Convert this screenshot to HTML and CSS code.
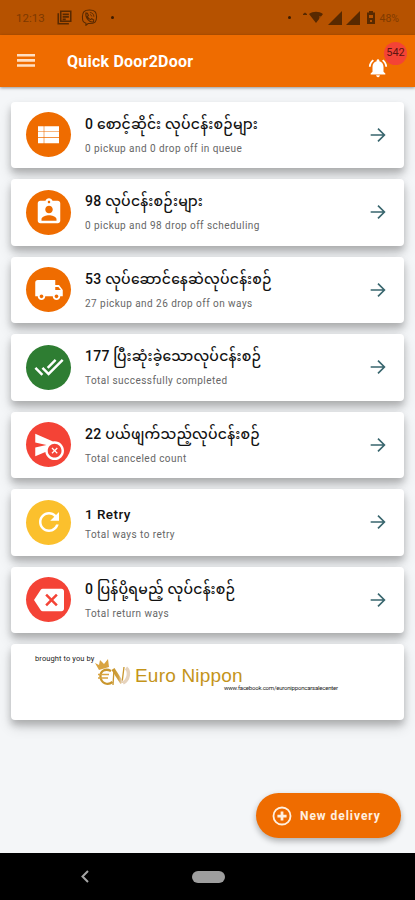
FILE: index.html
```html
<!DOCTYPE html>
<html lang="my">
<head>
    <meta charset="UTF-8">
    <meta name="viewport" content="width=device-width, initial-scale=1.0">
    <title>Quick Door2Door</title>
    <link rel="stylesheet" href="styles.css">
</head>
<body>
    <div class="status-bar">
        <span class="clock">12:13</span>
        <svg class="status-news" width="15" height="15" viewBox="0 0 24 24"><path fill="none" stroke="currentColor" stroke-width="2.5" d="M2 5v17h17M6 2h16v16H6z"/><path fill="none" stroke="currentColor" stroke-width="2.5" d="M9 7h10M9 11h10M9 15h5"/></svg>
        <svg class="status-call" width="17" height="17" viewBox="0 0 24 24"><path fill="none" stroke="currentColor" stroke-width="1.5" d="M12 1.500C4.500 1.500 2 4 2 11s1.500 8 5 9v3l3-2.500h2c7.500 0 10-2.500 10-9.500S19.500 1.500 12 1.500z"/><path fill="none" stroke="currentColor" stroke-width="1.5" d="M7 5.500l2 .5 1.500 3-1.500 1.500c1 2.500 2 3.500 4.500 4.500l1.500-1.500 3 2-.5 2.500c-5 1.500-12-5.500-10.500-12.500z"/><path fill="none" stroke="currentColor" stroke-width="1.200" d="M12.500 5c3.500.2 5.500 2 5.700 6M12.700 8c1.500.1 2.300 1 2.500 2.500"/></svg>
        <i class="dot"></i>
        <div class="status-right">
            <i class="dot"></i>
            <svg width="21" height="13" viewBox="0 0 21 13"><path d="M0 3l2-1.500L4 3v1H0zM6 3c4-3 10-3 14 0l-7 9z"/><path stroke="#b65200" stroke-width="1" fill="none" d="M17 5v6"/></svg>
            <svg width="14" height="14" viewBox="0 0 14 14"><path d="M14 0v14H0z"/></svg>
            <svg width="14" height="14" viewBox="0 0 14 14"><path d="M14 0v14H0z"/></svg>
            <svg class="battery" width="8" height="13" viewBox="0 0 8 13"><path fill-rule="evenodd" d="M2 0h4v1.500h2V13H0V1.500h2zM2 4v3h4V4zM3 9v2h2V9z"/></svg>
            <span class="percent">48%</span>
        </div>
    </div>

    <header class="app-bar">
        <svg class="menu" width="18" height="13" viewBox="0 0 18 13"><path d="M0 0h18v2.600H0zM0 5.100h18v2.600H0zM0 10.200h18v2.600H0z"/></svg>
        <h1>Quick Door2Door</h1>
        <div class="bell">
            <svg width="22" height="22" viewBox="0 0 24 24"><path d="M7.580 4.080L6.150 2.650C3.750 4.480 2.170 7.300 2.030 10.500h2c.15-2.650 1.510-4.970 3.550-6.420zm12.390 6.420h2c-.15-3.200-1.730-6.020-4.120-7.850l-1.420 1.430c2.020 1.450 3.390 3.770 3.540 6.420zM18 11c0-3.070-1.640-5.640-4.500-6.320V4c0-.83-.67-1.500-1.500-1.500s-1.500.67-1.500 1.500v.68C7.630 5.360 6 7.920 6 11v5l-2 2v1h16v-1l-2-2v-5zm-6 11c.14 0 .27-.01.4-.04.65-.14 1.180-.58 1.440-1.180.1-.24.15-.5.15-.78h-4c.01 1.100.9 2 2.010 2z"/></svg>
            <span class="badge">542</span>
        </div>
    </header>

    <main class="list">
        <div class="card">
            <div class="icon orange">
                <svg width="29" height="28" viewBox="0 0 24 24"><path d="M3 4.500h4.900v4.500H3zM8.400 4.500H21v4.500H8.400zM3 9.500h4.900v4.500H3zM8.400 9.500H21v4.500H8.400zM3 14.500h4.900V19H3zM8.400 14.500H21V19H8.400z"/></svg>
            </div>
            <div class="info">
                <h2>0 စောင့်ဆိုင်း လုပ်ငန်းစဉ်များ</h2>
                <p>0 pickup and 0 drop off in queue</p>
            </div>
            <svg class="arrow" width="22" height="22" viewBox="0 0 24 24"><path d="M4 12h15M12 5l7 7-7 7"/></svg>
        </div>
        <div class="card">
            <div class="icon orange">
                <svg width="30" height="30" viewBox="0 0 24 24"><path d="M19 3h-4.180C14.400 1.840 13.300 1 12 1s-2.400.84-2.820 2H5c-1.100 0-2 .9-2 2v14c0 1.100.9 2 2 2h14c1.100 0 2-.9 2-2V5c0-1.100-.9-2-2-2zm-7 0c.55 0 1 .45 1 1s-.45 1-1 1-1-.45-1-1 .45-1 1-1zm0 4c1.660 0 3 1.340 3 3s-1.340 3-3 3-3-1.340-3-3 1.340-3 3-3zm6 12H6v-1.400c0-2 4-3.100 6-3.100s6 1.100 6 3.100V19z"/></svg>
            </div>
            <div class="info">
                <h2>98 လုပ်ငန်းစဉ်းများ</h2>
                <p>0 pickup and 98 drop off scheduling</p>
            </div>
            <svg class="arrow" width="22" height="22" viewBox="0 0 24 24"><path d="M4 12h15M12 5l7 7-7 7"/></svg>
        </div>
        <div class="card">
            <div class="icon orange">
                <svg width="30" height="30" viewBox="0 0 24 24"><path d="M20 8h-3V4H3c-1.100 0-2 .9-2 2v11h2c0 1.660 1.340 3 3 3s3-1.340 3-3h6c0 1.660 1.340 3 3 3s3-1.340 3-3h2v-5l-3-4zM6 18.500c-.83 0-1.500-.67-1.500-1.500s.67-1.500 1.500-1.500 1.500.67 1.500 1.500-.67 1.500-1.500 1.500zm13.500-9l1.960 2.500H17V9.500h2.500zm-1.500 9c-.83 0-1.500-.67-1.500-1.500s.67-1.500 1.500-1.500 1.500.67 1.500 1.500-.67 1.500-1.500 1.500z"/></svg>
            </div>
            <div class="info">
                <h2>53 လုပ်ဆောင်နေဆဲလုပ်ငန်းစဉ်</h2>
                <p>27 pickup and 26 drop off on ways</p>
            </div>
            <svg class="arrow" width="22" height="22" viewBox="0 0 24 24"><path d="M4 12h15M12 5l7 7-7 7"/></svg>
        </div>
        <div class="card">
            <div class="icon green">
                <svg width="30" height="30" viewBox="0 0 24 24"><path d="M18 7l-1.410-1.410-6.340 6.340 1.410 1.410L18 7zm4.240-1.410L11.660 16.170 7.480 12l-1.410 1.410L11.660 19l12-12-1.420-1.410zM.41 13.410L6 19l1.410-1.410L1.830 12 .41 13.410z"/></svg>
            </div>
            <div class="info">
                <h2>177 ပြီးဆုံးခဲ့သောလုပ်ငန်းစဉ်</h2>
                <p>Total successfully completed</p>
            </div>
            <svg class="arrow" width="22" height="22" viewBox="0 0 24 24"><path d="M4 12h15M12 5l7 7-7 7"/></svg>
        </div>
        <div class="card">
            <div class="icon red">
                <svg width="30" height="30" viewBox="0 0 24 24"><path d="M16.500 9c-.42 0-.83.04-1.240.11L1.010 3 1 10l9 2-9 2 .01 7 8.070-3.460C9.590 21.190 12.710 24 16.500 24c4.140 0 7.500-3.360 7.500-7.500S20.640 9 16.500 9zm0 13c-3.030 0-5.500-2.470-5.500-5.500s2.470-5.500 5.500-5.500 5.500 2.470 5.500 5.500-2.470 5.500-5.500 5.500z"/><path d="M18.270 14.030l-1.770 1.760-1.770-1.760-.7.700 1.760 1.770-1.760 1.770.7.700 1.770-1.760 1.770 1.760.7-.7-1.760-1.770 1.760-1.770z"/></svg>
            </div>
            <div class="info">
                <h2>22 ပယ်ဖျက်သည့်လုပ်ငန်းစဉ်</h2>
                <p>Total canceled count</p>
            </div>
            <svg class="arrow" width="22" height="22" viewBox="0 0 24 24"><path d="M4 12h15M12 5l7 7-7 7"/></svg>
        </div>
        <div class="card">
            <div class="icon yellow">
                <svg width="30" height="30" viewBox="0 0 24 24"><path d="M17.650 6.350C16.200 4.900 14.210 4 12 4c-4.420 0-7.990 3.580-7.990 8s3.570 8 7.990 8c3.730 0 6.840-2.550 7.730-6h-2.080c-.82 2.330-3.040 4-5.650 4-3.310 0-6-2.690-6-6s2.690-6 6-6c1.660 0 3.140.69 4.220 1.780L13 11h7V4l-2.350 2.350z"/></svg>
            </div>
            <div class="info retry">
                <h2>1 Retry</h2>
                <p>Total ways to retry</p>
            </div>
            <svg class="arrow" width="22" height="22" viewBox="0 0 24 24"><path d="M4 12h15M12 5l7 7-7 7"/></svg>
        </div>
        <div class="card">
            <div class="icon red">
                <svg width="30" height="30" viewBox="0 0 24 24"><path d="M22 3H7c-.69 0-1.230.35-1.590.88L0 12l5.410 8.110c.36.530.9.890 1.590.89h15c1.100 0 2-.9 2-2V5c0-1.100-.9-2-2-2zm-3 12.590L17.590 17 14 13.410 10.410 17 9 15.590 12.590 12 9 8.410 10.410 7 14 10.590 17.590 7 19 8.410 15.410 12 19 15.590z"/></svg>
            </div>
            <div class="info">
                <h2>0 ပြန်ပို့ရမည့် လုပ်ငန်းစဉ်</h2>
                <p>Total return ways</p>
            </div>
            <svg class="arrow" width="22" height="22" viewBox="0 0 24 24"><path d="M4 12h15M12 5l7 7-7 7"/></svg>
        </div>

        <div class="card sponsor">
            <span class="by">brought to you by</span>
            <div class="brand">
                <svg width="37" height="31" viewBox="0 0 37 31">
                    <defs>
                        <linearGradient id="gold" x1="0" y1="0" x2="1" y2="0">
                            <stop offset="0" stop-color="#c9962c"/>
                            <stop offset="0.6" stop-color="#d0a040"/>
                            <stop offset="1" stop-color="#ead9c8"/>
                        </linearGradient>
                    </defs>
                    <path fill="#d9a441" d="M4 13L0 6l4 2 1-5 4 4 4-5 1 8z"/>
                    <path fill="none" stroke="#c9962c" stroke-width="2.300" d="M16 14c-6-3-11 0-10.500 6s7 9 12 5"/>
                    <path fill="none" stroke="#d9a441" stroke-width="1.300" d="M3 17.500h11M3 21h10"/>
                    <path fill="none" stroke="#c9962c" stroke-width="1.300" d="M18 28l1-16M27 26l2-16"/>
                    <path fill="none" stroke="url(#gold)" stroke-width="3.500" d="M18 12l9 14"/>
                    <path fill="none" stroke="#e6d3bd" stroke-width="3.500" d="M31 11c4 3 3 12-3 15"/>
                </svg>
                <span class="brand-name">Euro Nippon</span>
            </div>
            <span class="link">www.facebook.com/euronipponcarsalecenter</span>
        </div>
    </main>

    <button class="fab">
        <svg width="22" height="22" viewBox="0 0 24 24"><circle cx="12" cy="12" r="9.300" fill="none" stroke="currentColor" stroke-width="2"/><path d="M10.500 7h3v3.500H17v3h-3.500V17h-3v-3.500H7v-3h3.500z"/></svg>
        New delivery
    </button>

    <nav class="nav-bar">
        <svg width="8" height="13" viewBox="0 0 8 13"><path fill="none" stroke="#a5a5a5" stroke-width="2" d="M7 1L1.500 6.500 7 12"/></svg>
        <span class="home"></span>
    </nav>
</body>
</html>
```

FILE: styles.css
```css
* {
    box-sizing: border-box;
}
body {
    margin: 0;
    height: 900px;
    display: flex;
    flex-direction: column;
    font-family: Roboto, "Noto Sans Myanmar", "Noto Sans", sans-serif;
    background-color: #f4f6f8;
    overflow: hidden;
}
svg {
    fill: currentColor;
    flex: none;
}
h1, h2, p {
    margin: 0;
}
.status-bar {
    height: 35px;
    flex: none;
    display: flex;
    align-items: center;
    padding: 0 16px;
    background-color: #b65200;
    color: #582900;
    font-size: 11.500px;
}
.clock {
    width: 41px;
    margin-top: 1px;
    color: #7d3900;
}
.status-call {
    margin-left: 9px;
}
.dot {
    width: 3px;
    height: 3px;
    border-radius: 50%;
    background-color: #3d1c00;
}
.status-call + .dot {
    margin-left: 13px;
}
.status-right {
    display: flex;
    align-items: center;
    margin-left: auto;
}
.status-right svg {
    margin-left: 4px;
}
.status-right .dot + svg {
    margin-left: 12px;
}
.status-right .battery {
    margin-left: 7px;
}
.percent {
    margin: 1px 0 0 5px;
    font-size: 10.5px;
    color: #803b00;
}
.app-bar {
    height: 51.500px;
    flex: none;
    display: flex;
    align-items: center;
    padding: 0 26px 0 17px;
    background-color: #ef6c00;
    color: #fff;
    box-shadow: 0 1px 3px rgba(0, 0, 0, 0.4);
}
.menu {
    color: #ffdfc3;
}
.app-bar h1 {
    margin: 2px 0 0 32px;
    font-size: 16px;
    font-weight: 700;
    letter-spacing: 0.23px;
}
.bell {
    position: relative;
    height: 22px;
    margin: 15px 0 0 auto;
}
.badge {
    position: absolute;
    left: 17px;
    top: -15px;
    width: 23px;
    height: 23px;
    border-radius: 50%;
    background-color: #f44336;
    color: #5e1511;
    font-size: 11px;
    line-height: 22px;
    text-align: center;
}
.list {
    flex: 1;
    display: flex;
    flex-direction: column;
    gap: 11px;
    padding: 15px 11px 0;
}
.card {
    height: 66.500px;
    display: flex;
    align-items: center;
    padding: 0 15px;
    border-radius: 4px;
    background-color: #fff;
    box-shadow: 0 5px 7px rgba(0, 0, 0, 0.2), 0 7px 14px rgba(0, 0, 0, 0.14);
}
.icon {
    width: 45px;
    height: 45px;
    flex: none;
    display: flex;
    align-items: center;
    justify-content: center;
    border-radius: 50%;
    color: #fff;
}
.orange { background-color: #ef6c00; }
.green { background-color: #2e7d32; }
.red { background-color: #f44336; }
.yellow { background-color: #fbc02d; }
.info {
    flex: 1;
    margin-left: 14px;
    white-space: nowrap;
}
.info h2 {
    height: 20px;
    font-size: 14px;
    line-height: 20px;
    font-weight: 500;
    letter-spacing: 0.25px;
    color: #111;
}
.info p {
    margin-top: 8px;
    font-size: 10px;
    line-height: 14px;
    letter-spacing: 0.45px;
    color: #666;
}
.retry h2 {
    font-size: 13.500px;
    letter-spacing: 0.45px;
}
.retry p {
    margin-top: 4px;
}
.retry {
    padding-top: 1px;
}
.arrow {
    fill: none;
    stroke: #39666e;
    stroke-width: 1.800;
}
.sponsor {
    height: 76px;
    padding: 10px 24px 0;
    display: block;
    line-height: 1;
    white-space: nowrap;
}
.by {
    display: block;
    height: 3px;
    font-size: 7.500px;
    line-height: 10px;
    letter-spacing: 0.1px;
    color: #222;
}
.brand {
    display: flex;
    align-items: center;
    margin-left: 60px;
    height: 30px;
}
.brand-name {
    margin: 6px 0 0 3px;
    font-family: "Liberation Sans", sans-serif;
    font-size: 19px;
    letter-spacing: 0.2px;
    color: #c4941a;
}
.link {
    display: block;
    margin: -2px 0 0 189px;
    font-size: 6px;
    letter-spacing: -0.2px;
    color: #222;
}
.fab {
    height: 45px;
    flex: none;
    display: flex;
    align-items: center;
    align-self: flex-end;
    width: 145px;
    margin: 0 14px 15px 0;
    padding: 0 0 0 15px;
    border: none;
    border-radius: 23px;
    background-color: #ef6c00;
    color: #fff0e0;
    font-family: Roboto, sans-serif;
    font-size: 12px;
    font-weight: 700;
    letter-spacing: 0.95px;
    gap: 7px;
    box-shadow: 0 3px 6px rgba(0, 0, 0, 0.3);
}
.nav-bar {
    height: 47px;
    flex: none;
    display: flex;
    align-items: center;
    padding-left: 81px;
    background-color: #000;
}
.home {
    width: 33px;
    height: 12px;
    margin-left: 103px;
    border-radius: 6px;
    background-color: #9e9e9e;
}
```
